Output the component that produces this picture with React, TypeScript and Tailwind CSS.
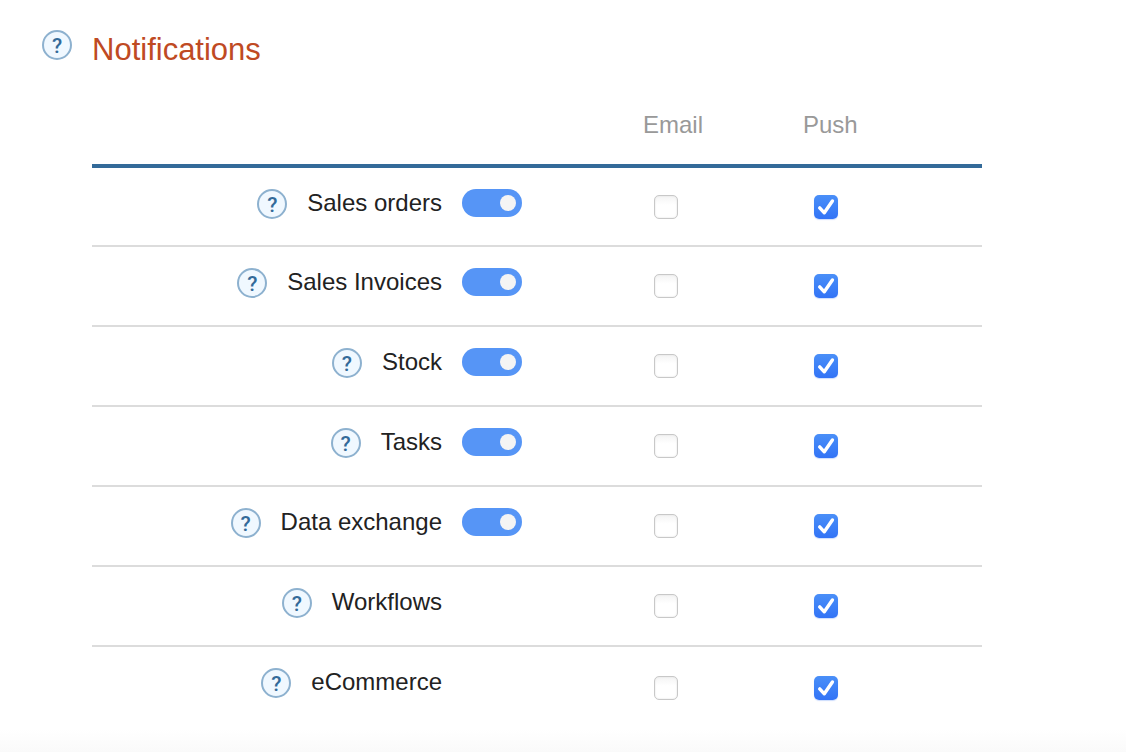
import { useState } from "react";

type Channel = "email" | "push";

type NotificationRow = {
  id: string;
  label: string;
  enabled?: boolean;
  email: boolean;
  push: boolean;
};

const initialRows: NotificationRow[] = [
  { id: "sales-orders", label: "Sales orders", enabled: true, email: false, push: true },
  { id: "sales-invoices", label: "Sales Invoices", enabled: true, email: false, push: true },
  { id: "stock", label: "Stock", enabled: true, email: false, push: true },
  { id: "tasks", label: "Tasks", enabled: true, email: false, push: true },
  { id: "data-exchange", label: "Data exchange", enabled: true, email: false, push: true },
  { id: "workflows", label: "Workflows", email: false, push: true },
  { id: "ecommerce", label: "eCommerce", email: false, push: true },
];

function HelpButton({ topic }: { topic: string }) {
  return (
    <button
      type="button"
      aria-label={`Help: ${topic}`}
      className="flex size-[30px] shrink-0 items-center justify-center rounded-full border-2 border-[#8db1cf] bg-[#f0f8ff] pt-0.5 font-[Roboto,sans-serif] text-[21px] leading-none font-medium text-[#336a99]"
    >
      ?
    </button>
  );
}

function Toggle({ id, checked, onChange }: { id: string; checked: boolean; onChange: () => void }) {
  return (
    <input
      id={id}
      type="checkbox"
      role="switch"
      checked={checked}
      onChange={onChange}
      className="flex h-7 w-[60px] cursor-pointer appearance-none items-center rounded-full bg-gray-300 px-1.5 before:size-4 before:rounded-full before:bg-[#f4f4f4] checked:justify-end checked:bg-[#5695f6]"
    />
  );
}

function Checkbox({ label, checked, onChange }: { label: string; checked: boolean; onChange: () => void }) {
  return (
    <span className="grid size-6">
      <input
        type="checkbox"
        aria-label={label}
        checked={checked}
        onChange={onChange}
        className="peer col-start-1 row-start-1 size-6 appearance-none rounded-[5px] border border-[#c8c8c8] bg-linear-to-b from-[#f4f4f4] to-white to-40% shadow-[inset_0_0_2px_#dddddd] checked:border-0 checked:from-[#4a8ff8] checked:to-[#3273f6] checked:to-100% checked:shadow-[0_1px_1px_#3273f640]"
      />
      <svg
        viewBox="0 0 24 24"
        fill="none"
        stroke="white"
        strokeWidth="3.4"
        strokeLinecap="round"
        strokeLinejoin="round"
        aria-hidden="true"
        className="pointer-events-none invisible col-start-1 row-start-1 size-6 peer-checked:visible"
      >
        <path d="M5.7 12.9 10.3 17.8 18.4 6" />
      </svg>
    </span>
  );
}

export default function App() {
  const [rows, setRows] = useState(initialRows);

  const flip = (id: string, key: Channel | "enabled") => {
    setRows((current) => current.map((row) => (row.id === id ? { ...row, [key]: !row[key] } : row)));
  };

  return (
    <main className="flex min-h-screen flex-col bg-white font-['Liberation_Sans',Arial,sans-serif] text-2xl text-[#222222]">
      <header className="flex items-start gap-5 pt-[30px] pl-[42px]">
        <HelpButton topic="Notifications" />
        <h1 className="text-[31px] leading-10 text-[#bf4a23]">Notifications</h1>
      </header>

      <div className="pr-36 pl-[92px]">
        <table className="w-full table-fixed border-separate border-spacing-0 text-left">
          <colgroup>
            <col className="w-[350px]" />
            <col className="w-[200px]" />
            <col className="w-[160px]" />
            <col />
          </colgroup>
          <thead>
            <tr className="h-[98px] align-top text-[#999999] *:border-b-4 *:border-[#336a99] *:pt-[41px] *:pl-px *:leading-7 *:font-normal">
              <td colSpan={2} />
              <th scope="col">Email</th>
              <th scope="col">Push</th>
            </tr>
          </thead>
          <tbody>
            {rows.map((row) => (
              <tr key={row.id} className="h-20 *:border-b-2 *:border-[#dcdcdc] first:h-[79px] last:h-[82px] last:*:border-b-0">
                <th scope="row" className="pt-[21px] align-top font-normal">
                  <div className="flex justify-end gap-5">
                    <HelpButton topic={row.label} />
                    {row.enabled === undefined ? (
                      <span className="leading-7">{row.label}</span>
                    ) : (
                      <label htmlFor={row.id} className="leading-7">{row.label}</label>
                    )}
                  </div>
                </th>
                <td className="pt-[21px] pl-5 align-top">
                  {row.enabled !== undefined && (
                    <Toggle id={row.id} checked={row.enabled} onChange={() => flip(row.id, "enabled")} />
                  )}
                </td>
                <td className="pl-3">
                  <Checkbox label={`${row.label} email`} checked={row.email} onChange={() => flip(row.id, "email")} />
                </td>
                <td className="pl-3">
                  <Checkbox label={`${row.label} push`} checked={row.push} onChange={() => flip(row.id, "push")} />
                </td>
              </tr>
            ))}
          </tbody>
        </table>
      </div>

      <div className="grow bg-linear-to-b from-white to-[#fafafa]" />
    </main>
  );
}
